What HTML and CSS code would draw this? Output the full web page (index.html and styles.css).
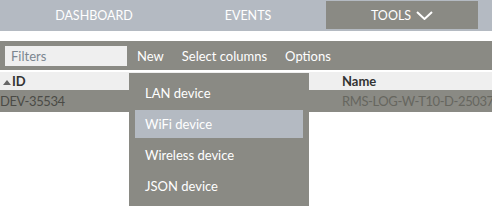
FILE: index.html
```html
<!DOCTYPE html>
<html>
<head>
<meta charset="utf-8">
<link rel="stylesheet" href="styles.css">
</head>
<body>
<nav class="nav">
  <a class="nav-item">DASHBOARD</a>
  <a class="nav-item">EVENTS</a>
  <a class="nav-item active">TOOLS
    <svg class="chev" width="17" height="9" viewBox="0 0 17 9"><polyline points="1,1 8.5,8 16,1" fill="none" stroke="#fff" stroke-width="2"/></svg>
  </a>
</nav>
<div class="toolbar">
  <input class="filter" placeholder="Filters">
  <div class="tb-menu">
    <span class="tb-item">New</span>
    <div class="dropdown">
      <div class="dd-item">LAN device</div>
      <div class="dd-item hover">WiFi device</div>
      <div class="dd-item">Wireless device</div>
      <div class="dd-item">JSON device</div>
    </div>
  </div>
  <span class="tb-item">Select columns</span>
  <span class="tb-item">Options</span>
</div>
<div class="table">
  <div class="th col-id"><span class="sort"></span>ID</div>
  <div class="th col-name">Name</div>
  <div class="td col-id dev">DEV-35534</div>
  <div class="td col-name rms">RMS-LOG-W-T10-D-25037</div>
</div>
</body>
</html>
```
FILE: styles.css
```css
* { box-sizing: border-box; }
html, body { margin: 0; padding: 0; background: #fff; }
body { font-family: "Lato", "Open Sans", sans-serif; font-size: 13px; overflow: hidden; width: 492px; height: 218px; }

.nav {
  display: flex;
  gap: 2px;
  height: 31px;
  padding: 1px 0 0 18px;
  background: #b4bac2;
  align-items: flex-start;
}
.nav-item {
  width: 152px;
  height: 28px;
  display: flex;
  align-items: center;
  justify-content: center;
  gap: 5px;
  color: #fff;
  font-size: 12.5px;
}
.nav-item.active { background: #8a8a84; }
.chev { display: block; margin-top: 1px; }

.toolbar {
  margin-top: 10px;
  height: 29px;
  background: #8a8a84;
  display: flex;
  align-items: center;
  padding: 1px 0 0 5px;
  position: relative;
}
.filter {
  width: 122px;
  height: 20px;
  border: none;
  background: #efefef;
  padding: 0 6px;
  font-family: inherit;
  font-size: 13px;
  margin-right: 1px;
  outline: none;
}
.filter::placeholder { color: #7b8690; }
.tb-menu { position: relative; }
.tb-item { color: #fff; padding: 0 9px; display: block; }
.dropdown {
  position: absolute;
  left: 1px;
  top: 25px;
  width: 180px;
  background: #8a8a84;
  padding: 6px;
  display: flex;
  flex-direction: column;
  gap: 3px;
  z-index: 5;
}
.dd-item {
  height: 28px;
  display: flex;
  align-items: center;
  padding-left: 10px;
  color: #fff;
}
.dd-item.hover { background: #b4bac2; }

.table {
  margin-top: 2px;
  display: grid;
  grid-template-columns: 339px 1fr;
}
.th {
  height: 18px;
  background: #efefef;
  font-weight: bold;
  color: #333;
  display: flex;
  align-items: center;
}
.td {
  height: 22px;
  background: #8a8a84;
  display: flex;
  align-items: center;
  white-space: nowrap;
  overflow: hidden;
  letter-spacing: -0.4px;
}
.col-id { padding-left: 0; }
.th.col-id { padding-left: 3px; }
.col-name { padding-left: 3px; }
.sort {
  width: 0; height: 0;
  border-left: 4px solid transparent;
  border-right: 4px solid transparent;
  border-bottom: 5px solid #666;
  margin: 2px 1px 0 0;
}
.dev { color: #4a4a46; }
.rms { color: #66665f; }
```
